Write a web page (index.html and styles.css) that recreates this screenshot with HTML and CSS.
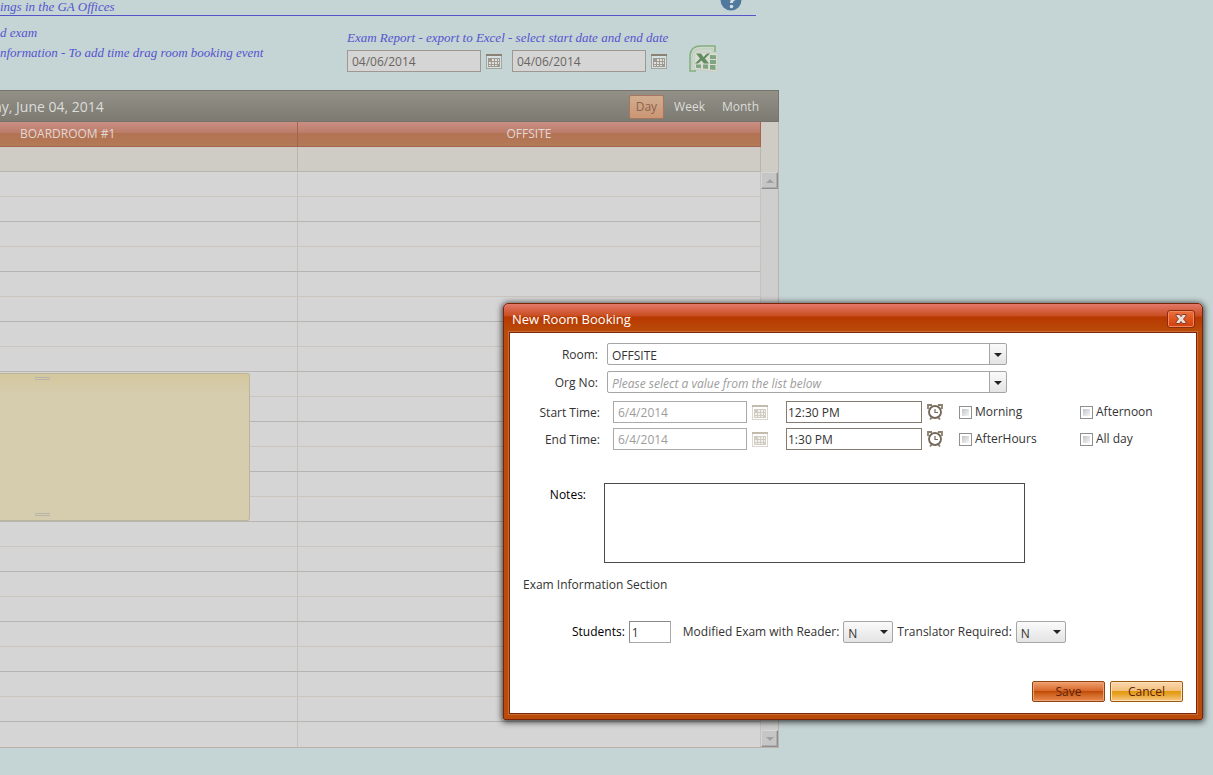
FILE: index.html
```html
<!DOCTYPE html>
<html lang="en">
<head>
    <meta charset="UTF-8">
    <meta name="viewport" content="width=device-width, initial-scale=1.0">
    <title>Room Bookings</title>
    <link rel="stylesheet" href="styles.css">
</head>
<body>
    <svg class="symbols" aria-hidden="true">
        <symbol id="calendar" viewBox="0 0 16 15">
            <rect x="0.5" y="0.5" width="15" height="14" fill="#fff" fill-opacity="0.3" stroke="currentColor" stroke-opacity="0.6"/>
            <path d="M0 1h16" stroke="currentColor" stroke-width="2"/>
            <path d="M2 4h12v9H2z" fill="currentColor" fill-opacity="0.75"/>
            <path d="M6 5h2v2H6zM9 5h2v2H9zM12 5h1v2h-1zM3 8h2v2H3zM6 8h2v2H6zM9 8h2v2H9zM12 8h1v2h-1zM3 11h2v1H3zM6 11h2v1H6zM9 11h2v1H9z" fill="#fff" fill-opacity="0.7"/>
        </symbol>
        <symbol id="alarm" viewBox="0 0 16 16">
            <path d="M1 5V1h4M15 5V1h-4M3 15.500l2-2.500M13 15.500l-2-2.500" fill="none" stroke="#8a7e6c" stroke-width="1.8"/>
            <circle cx="8" cy="8" r="6" fill="#fff" stroke="#74695a" stroke-width="1.9"/>
            <path d="M8 5v3.500h3" fill="none" stroke="#74695a" stroke-width="1.2"/>
        </symbol>
    </svg>

    <div class="page">
        <header class="page-title">
            <h1>ings in the GA Offices</h1>
            <a href="#" class="help" aria-label="Help">
                <svg width="22" height="22" viewBox="0 0 22 22">
                    <circle cx="11" cy="11" r="10.5" fill="#51799e"/>
                    <path d="M6.500 8q0-4 4.500-4t4.500 3.500q0 2-2 3T11.500 14" fill="none" stroke="#d5dfe3" stroke-width="3"/>
                    <circle cx="11.500" cy="17.500" r="1.800" fill="#d5dfe3"/>
                </svg>
            </a>
        </header>

        <div class="tools">
            <div class="hints">
                <p>d exam</p>
                <p>nformation - To add time drag room booking event</p>
            </div>
            <form class="report">
                <p>Exam Report - export to Excel - select start date and end date</p>
                <div class="report-fields">
                    <input type="text" class="report-date" value="04/06/2014" aria-label="Start date">
                    <button type="button" class="icon-button report-icon" aria-label="Pick start date"><svg width="16" height="15"><use href="#calendar"/></svg></button>
                    <input type="text" class="report-date" value="04/06/2014" aria-label="End date">
                    <button type="button" class="icon-button report-icon" aria-label="Pick end date"><svg width="16" height="15"><use href="#calendar"/></svg></button>
                    <button type="button" class="icon-button excel" aria-label="Export to Excel">
                        <svg width="30" height="28" viewBox="0 0 30 28">
                            <path d="M1 26V10Q2 1 12 1H26V8H6V25z" fill="#cdd9cf"/>
                            <path d="M7 26H1V10Q2 1 12 1H26V7" fill="none" stroke="#82ad7d" stroke-width="1.500"/>
                            <path d="M3 24V11Q4 4 12 4H24V7" fill="none" stroke="#b9cbb6"/>
                            <path d="M6 7L29 8L28 27L5 24z" fill="#d9dcd3" stroke="#c3cbc0" stroke-width="0.700"/>
                            <path d="M7 8.500h5l2.500 3.500L18 8.500h3L16 13.500l4 5h-5l-2.500-3L9 18.500H6l5-5z" fill="#628d60"/>
                            <path d="M21 10l6 .3v3.700h-6zM21 15h6v4h-6zM21 20h5.500v5l-5.500-.6zM14 19.500h5v4.500l-5-.5zM7 19.500h5v3.800l-5-.6z" fill="#7fa583"/>
                        </svg>
                    </button>
                </div>
            </form>
        </div>

        <section class="scheduler">
            <div class="scheduler-bar">
                <h2>ay, June 04, 2014</h2>
                <nav class="views">
                    <a href="#" class="active">Day</a>
                    <a href="#">Week</a>
                    <a href="#">Month</a>
                </nav>
            </div>
            <div class="scheduler-body">
                <table class="slots">
                    <thead>
                        <tr><th class="boardroom">BOARDROOM #1</th><th>OFFSITE</th></tr>
                    </thead>
                    <tbody>
                        <tr class="all-day"><td></td><td></td></tr>
                        <tr><td></td><td></td></tr>
                        <tr><td></td><td></td></tr>
                        <tr><td></td><td></td></tr>
                        <tr><td></td><td></td></tr>
                        <tr><td></td><td></td></tr>
                        <tr><td></td><td></td></tr>
                        <tr><td></td><td></td></tr>
                        <tr><td></td><td></td></tr>
                        <tr><td></td><td></td></tr>
                        <tr><td></td><td></td></tr>
                        <tr><td></td><td></td></tr>
                        <tr><td></td><td></td></tr>
                        <tr><td></td><td></td></tr>
                        <tr><td></td><td></td></tr>
                        <tr><td></td><td></td></tr>
                        <tr><td></td><td></td></tr>
                        <tr><td></td><td></td></tr>
                        <tr><td></td><td></td></tr>
                        <tr><td></td><td></td></tr>
                        <tr><td></td><td></td></tr>
                        <tr><td></td><td></td></tr>
                        <tr><td></td><td></td></tr>
                        <tr><td></td><td></td></tr>
                    </tbody>
                </table>
                <div class="scrollbar">
                    <div class="scroll-track">
                        <button type="button" class="scroll-button up" aria-label="Scroll up"></button>
                        <button type="button" class="scroll-button down" aria-label="Scroll down"></button>
                    </div>
                </div>
                <div class="booking">
                    <span class="grip"></span>
                    <span class="grip"></span>
                </div>
            </div>
        </section>
    </div>

    <div class="dialog" role="dialog" aria-labelledby="dialogTitle">
        <div class="dialog-title">
            <h2 id="dialogTitle">New Room Booking</h2>
            <button type="button" class="close" aria-label="Close">
                <svg width="12" height="10" viewBox="0 0 12 10">
                    <path d="M1 .5h3.500L6 2.500 7.500.5H11v1.500L8.500 5 11 8v1.500H7.500L6 7.500 4.500 9.500H1V8l2.500-3L1 2z" fill="#e8dcd4" stroke="#7c3420" stroke-width="0.900"/>
                </svg>
            </button>
        </div>
        <form class="dialog-body">
            <div class="row">
                <label class="name" for="room">Room:</label>
                <span class="combo">
                    <select id="room"><option>OFFSITE</option></select>
                </span>
            </div>
            <div class="row">
                <label class="name" for="org">Org No:</label>
                <span class="combo">
                    <select id="org" class="empty"><option>Please select a value from the list below</option></select>
                </span>
            </div>
            <div class="times">
                <label class="name" for="startDate">Start Time:</label>
                <input type="text" id="startDate" value="6/4/2014" disabled>
                <button type="button" class="icon-button" aria-label="Pick start date" disabled><svg width="16" height="15"><use href="#calendar"/></svg></button>
                <input type="text" class="time" value="12:30 PM" aria-label="Start time">
                <button type="button" class="icon-button" aria-label="Pick start time"><svg width="16" height="16"><use href="#alarm"/></svg></button>
                <label class="check"><input type="checkbox">Morning</label>
                <label class="check"><input type="checkbox">Afternoon</label>

                <label class="name" for="endDate">End Time:</label>
                <input type="text" id="endDate" value="6/4/2014" disabled>
                <button type="button" class="icon-button" aria-label="Pick end date" disabled><svg width="16" height="15"><use href="#calendar"/></svg></button>
                <input type="text" class="time" value="1:30 PM" aria-label="End time">
                <button type="button" class="icon-button" aria-label="Pick end time"><svg width="16" height="16"><use href="#alarm"/></svg></button>
                <label class="check"><input type="checkbox">AfterHours</label>
                <label class="check"><input type="checkbox">All day</label>
            </div>
            <div class="notes">
                <label for="notes">Notes:</label>
                <textarea id="notes"></textarea>
            </div>
            <h3>Exam Information Section</h3>
            <div class="exam">
                <label class="strong" for="students">Students:</label>
                <input type="text" id="students" value="1">
                <label for="reader">Modified Exam with Reader:</label>
                <span class="dropdown"><select id="reader"><option>N</option><option>Y</option></select></span>
                <label for="translator">Translator Required:</label>
                <span class="dropdown"><select id="translator"><option>N</option><option>Y</option></select></span>
            </div>
            <div class="buttons">
                <button type="submit" class="save">Save</button>
                <button type="button" class="cancel">Cancel</button>
            </div>
        </form>
    </div>
</body>
</html>
```
FILE: styles.css
```css
* {
    box-sizing: border-box;
}

body {
    margin: 0;
    min-height: 100vh;
    overflow: hidden;
    background-color: #c5d4d4;
    font-family: "Open Sans", "Noto Sans", sans-serif;
    font-size: 12px;
    line-height: 16px;
    color: #333;
}

h1, h2, h3, p {
    margin: 0;
    font-weight: normal;
}

input, select, textarea, button {
    font: inherit;
    color: inherit;
    border-radius: 0;
}

.symbols {
    position: absolute;
    width: 0;
    height: 0;
}

.page {
    width: 779px;
}

/* Heading and report tools */
.page-title {
    display: flex;
    justify-content: space-between;
    align-items: flex-end;
    width: 756px;
    height: 16px;
    padding-right: 14px;
    border-bottom: 1px solid #5355c8;
}

.page-title h1, .hints, .report p {
    font-family: "Liberation Serif", serif;
    font-style: italic;
    font-size: 13px;
    line-height: 20px;
    color: #5355d0;
}

.page-title h1 {
    line-height: 16px;
}

.help {
    height: 26px;
}

.tools {
    display: flex;
    justify-content: space-between;
    height: 74px;
    padding: 7px 61px 0 0;
}

.report {
    width: 371px;
    padding-top: 5px;
}

.report-fields {
    display: flex;
    align-items: center;
    gap: 5px;
    padding-top: 1px;
}

.report-date {
    width: 134px;
    height: 22px;
    padding: 0 4px;
    border: 1px solid #a09890;
    background-color: #d5d5d5;
    color: #6a6560;
}

.icon-button {
    display: flex;
    padding: 0;
    border: none;
    background: none;
    color: #8a8275;
}

.icon-button:disabled {
    color: #c2bbae;
}

.report-icon {
    margin-right: 5px;
}

.excel {
    margin: -4px 0 0 12px;
}

/* Scheduler */
.scheduler-bar {
    display: flex;
    justify-content: space-between;
    align-items: center;
    height: 32px;
    padding: 1px 12px 0 0;
    border: 1px solid #77736b;
    border-left: none;
    background: linear-gradient(#929087, #7c7a71);
    color: #dcdcda;
}

.scheduler-bar h2 {
    margin-left: -6px;
    font-size: 14px;
}

.views {
    display: flex;
    gap: 3px;
}

.views a {
    padding: 3px 6px;
    border: 1px solid transparent;
    color: inherit;
    text-decoration: none;
}

.views .active {
    border-color: #a87660;
    border-radius: 2px;
    background: linear-gradient(#d1ad90, #cb9674);
    color: #8b6350;
}

.scheduler-body {
    display: flex;
    position: relative;
    border-right: 1px solid #c1b0a8;
    border-bottom: 1px solid #c1b0a8;
}

.slots {
    flex: 1;
    table-layout: fixed;
    border-collapse: separate;
    border-spacing: 0;
    background-color: #d5d5d5;
}

.slots th {
    height: 25px;
    padding: 0;
    border-right: 1px solid #a5644e;
    border-bottom: 1px solid #a5644e;
    background: linear-gradient(#cb8e85, #bb7d68 45%, #b37254 46%, #b37a56);
    color: #e2d8d3;
    font-weight: normal;
}

.slots .boardroom {
    width: 298px;
    padding-left: 20px;
    text-align: left;
}

.slots td {
    height: 25px;
    padding: 0;
    border-right: 1px solid #c6c2bb;
    border-bottom: 1px solid #b7b4b1;
}

.slots tr:nth-child(even) td {
    border-bottom-color: #cac5be;
}

.slots tr:last-child td {
    border-bottom: none;
}

.slots .all-day td {
    border-color: #b8b5ab;
    background-color: #cfccc6;
}

.scrollbar {
    width: 17px;
    padding-top: 50px;
    background-color: #cfccc6;
}

.scroll-track {
    display: flex;
    flex-direction: column;
    justify-content: space-between;
    height: 100%;
    background-color: #cecece;
}

.scroll-button {
    display: flex;
    justify-content: center;
    align-items: center;
    width: 17px;
    height: 17px;
    padding: 0;
    border: 1px solid;
    border-color: #d6d6d6 #8e8e8e #8e8e8e #d6d6d6;
    background-color: #c6c6c6;
    box-shadow: inset -1px -1px #adadad;
}

.scroll-button::before {
    content: "";
    border: 4px solid transparent;
}

.up::before {
    border-top: none;
    border-bottom-color: #a0a0a0;
}

.down::before {
    border-bottom: none;
    border-top-color: #a0a0a0;
}

.booking {
    position: absolute;
    top: 251px;
    left: 0;
    display: flex;
    flex-direction: column;
    justify-content: space-between;
    width: 250px;
    height: 148px;
    padding: 3px 0 4px 35px;
    border: 1px solid #bbb59a;
    border-left: none;
    border-radius: 0 3px 3px 0;
    background: linear-gradient(#d4c79e, #d6cdae 20px);
}

.grip {
    width: 15px;
    height: 3px;
    border: 1px solid #b8b5a8;
    border-width: 1px 0;
}

/* New booking dialog */
.dialog {
    position: absolute;
    top: 303px;
    left: 503px;
    width: 700px;
    padding: 0 6px 6px;
    border: 1px solid #7a2408;
    border-radius: 5px 5px 2px 2px;
    background: linear-gradient(#e4786a, #c84d20 12px, #b83800 13px, #b94c0b 28px);
    box-shadow: 0 1px 6px 1px rgba(0, 0, 0, 0.75);
}

.dialog-title {
    display: flex;
    justify-content: space-between;
    align-items: center;
    height: 29px;
    padding: 1px 1px 0 2px;
    color: #fff;
}

.dialog-title h2 {
    font-size: 13px;
}

.close {
    display: flex;
    justify-content: center;
    align-items: center;
    width: 28px;
    height: 18px;
    padding: 0;
    border: 1px solid #8c2b10;
    border-radius: 3px;
    background: linear-gradient(#ea7140, #e0541f 50%, #d23f10);
    box-shadow: inset 0 0 0 1px #f08a58;
}

.dialog-body {
    padding: 10px 13px 11px 0;
    background-color: #fff;
    box-shadow: 0 0 0 1px #7a2408, 0 0 0 2px #cc6c32;
}

.row {
    display: flex;
    align-items: center;
    gap: 9px;
    margin-bottom: 6px;
}

.name {
    padding-top: 2px;
    text-align: right;
}

.row .name {
    width: 88px;
}

.combo, .dropdown {
    display: flex;
    position: relative;
}

.combo::after, .dropdown::after {
    content: "";
    position: absolute;
    top: 9px;
    right: 5px;
    border: 4px solid transparent;
    border-top-color: #222;
    border-bottom: none;
    pointer-events: none;
}

.combo::after {
    top: 10px;
}

.dropdown::after {
    top: 9px;
}

.combo select, .dropdown select {
    appearance: none;
    height: 22px;
    padding: 4px 4px 0;
    border: 1px solid #a6a6a6;
    border-radius: 2px;
}

.combo select {
    width: 400px;
    background: linear-gradient(#fafafa, #e4e4e4) right / 16px 100% no-repeat,
                linear-gradient(#a6a6a6, #a6a6a6) right / 17px 100% no-repeat #fff;
}

.combo .empty {
    font-style: italic;
    color: #9c9c9c;
}

.times {
    display: grid;
    grid-template-columns: 90px 142px 16px 149px 16px 127px 1fr;
    align-items: center;
    gap: 5px;
    margin-top: 8px;
}

.times input[type="text"] {
    height: 22px;
    border: 1px solid #aaa;
    background-color: #fff;
}

.times input[type="text"]:disabled {
    width: 134px;
    margin-left: 8px;
    padding: 0 4px;
    color: #9c9c9c;
}

.times input.time {
    width: 136px;
    margin-left: 13px;
    padding: 0 1px;
    border-color: #857b6f;
}

.check {
    display: flex;
    align-items: center;
    gap: 3px;
}

.check:nth-child(7n+6) {
    margin-left: 11px;
}

.check input {
    appearance: none;
    width: 13px;
    height: 13px;
    margin: 0;
    border: 1px solid #8e8f8f;
    background: linear-gradient(135deg, #c0c3c8, #f6f6f6) content-box;
    padding: 2px;
}

.notes {
    display: flex;
    gap: 18px;
    margin-top: 33px;
    color: #000;
}

.notes label {
    width: 76px;
    padding-top: 4px;
    text-align: right;
}

.notes textarea {
    width: 421px;
    height: 80px;
    border: 1px solid #4a4a4a;
    resize: none;
}

.dialog-body h3 {
    margin: 14px 0 28px 13px;
    font-size: 12px;
}

.exam {
    display: flex;
    align-items: center;
    gap: 4px;
    padding-left: 62px;
}

.exam .strong {
    color: #000;
}

.exam input {
    width: 42px;
    height: 22px;
    margin-right: 8px;
    padding: 0 2px;
    border: 1px solid #aaa;
    border-top-color: #888;
    border-left-color: #888;
}

.dropdown select {
    width: 50px;
    background: linear-gradient(#fafafa, #e4e4e4);
}

.buttons {
    display: flex;
    justify-content: flex-end;
    gap: 5px;
    margin-top: 38px;
}

.buttons button {
    width: 73px;
    height: 21px;
    padding: 0;
    border-radius: 2px;
    color: #5e2408;
}

.save {
    border: 1px solid #8f4410;
    background: linear-gradient(#f0a070, #d86a2c 45%, #c04c08 50%, #cf6420 65%, #e88850);
    box-shadow: inset 0 0 0 1px #efa478;
}

.cancel {
    border: 1px solid #9a5a10;
    background: linear-gradient(#fbd8b0, #f3bf7c 45%, #e39a10 50%, #e8a428 65%, #f8c888);
    box-shadow: inset 0 0 0 1px #fde0b8;
}
```
